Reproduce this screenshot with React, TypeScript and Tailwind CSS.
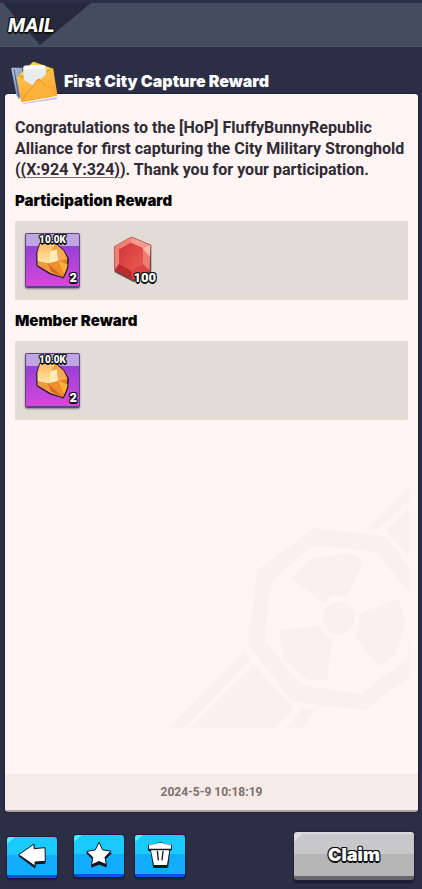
import type { ReactNode } from "react";

const outline =
  "[text-shadow:1px_0_#111,-1px_0_#111,0_1px_#111,0_-1px_#111,1px_1px_#111,-1px_-1px_#111,1px_-1px_#111,-1px_1px_#111,0_2px_#111]";

function EnvelopeIcon() {
  return (
    <svg viewBox="0 0 140 128" className="relative z-10 -mb-[10px] h-[43px] w-[47px] shrink-0" aria-hidden="true">
      <defs>
        <linearGradient id="envFront" x1="0" y1="0" x2="0.4" y2="1">
          <stop offset="0" stopColor="#ffd05a" />
          <stop offset="1" stopColor="#f9a12c" />
        </linearGradient>
        <linearGradient id="envBlue" x1="0" y1="0" x2="1" y2="1">
          <stop offset="0" stopColor="#b9c9e6" />
          <stop offset="1" stopColor="#66799f" />
        </linearGradient>
      </defs>
      <path d="M34 126 L138 108 L138 113 L36 128Z" fill="#20243b" opacity="0.25" />
      <path d="M1 24 Q0 20 5 20 L34 20 L38 112 L17 105Z" fill="url(#envBlue)" />
      <path d="M9 24 L24 112" stroke="#4d5d83" strokeWidth="3" />
      <path d="M18 48 L64 4 Q67 1 71 3 L126 23 L128 62 L40 80Z" fill="#eda62d" />
      <path d="M22 44 L66 4 L124 24 L84 30Z" fill="#ffd44d" />
      <path d="M18 48 Q17 44 22 46 L67 74 L118 26 Q124 20 126 27 L138 98 Q139 103 134 104 L36 122 Q30 123 29 117Z" fill="url(#envFront)" />
      <path d="M38 56 L36 20 Q36 15 41 14 L97 12 Q102 12 103 17 L106 38 L88 55 Q82 50 77 56 L66 74Z" fill="#e9ebee" />
      <path d="M41 14 L97 12 L101 22 L38 26Z" fill="#fafafa" />
      <path d="M32 119 L76 59 Q81 53 87 57 L135 101" fill="#fbb23a" />
      <path d="M32 119 L76 59 Q81 53 87 57 L104 73" fill="none" stroke="#dc8422" strokeWidth="2" />
    </svg>
  );
}

function Watermark() {
  return (
    <svg
      viewBox="0 0 747 743"
      className="pointer-events-none absolute bottom-[46px] right-[9px] h-[248px] w-[249px]"
      fill="#faf1ee"
      aria-hidden="true"
    >
      <path
        fillRule="evenodd"
        d="M464 143 L677 169 L747 257 V337 L648 217 L464 193 L333 302 L314 482 L427 617 L603 641 L741 538 L747 466 V592 L611 690 L394 663 L264 491 L291 270Z"
      />
      <path d="M394 297 L446 237 L573 218 L610 242 L560 350 Q535 341 512 351 L490 367Z" />
      <path d="M598 401 L714 354 L739 427 L704 528 L658 558 L583 467Q600 438 598 401Z" />
      <path d="M358 450 L482 435 Q490 465 516 484 L501 601 L443 599 L370 535Z" />
      <circle cx="536" cy="413" r="48" />
      <path d="M747 18 V62 L653 149 H617Z" />
      <path d="M747 82 V230 L679 151Z" />
      <path d="M253 511 L270 537 L76 743 H27Z" />
      <path d="M280 552 L402 684 L348 743 H92Z" />
      <path d="M424 688 H468 L425 743 H380Z" />
    </svg>
  );
}

function AmberCrate() {
  return (
    <div className="relative h-[55px] w-[55px] overflow-hidden rounded-[2px] border border-b-2 border-[#5c4579] bg-linear-to-b from-[#8538d5] to-[#d747dc] shadow-[0_1px_2px_#8b7d88]">
      <div className="h-3 bg-[#bda6e3]" />
      <svg viewBox="0 0 165 165" className="absolute inset-0 h-full w-full" aria-hidden="true">
        <defs>
          <linearGradient id="amberBase" x1="0" y1="0" x2="0.3" y2="1">
            <stop offset="0" stopColor="#f9a94c" />
            <stop offset="1" stopColor="#e27822" />
          </linearGradient>
          <linearGradient id="amberSide" x1="0" y1="0" x2="0" y2="1">
            <stop offset="0" stopColor="#ffce7c" />
            <stop offset="1" stopColor="#ffe6ac" />
          </linearGradient>
        </defs>
        <path d="M43 30 L92 28 L118 54 L132 78 L130 108 L117 138 L76 126 L34 100 L33 61Z" fill="url(#amberBase)" stroke="#2b1927" strokeWidth="5" strokeLinejoin="round" />
        <path d="M43 32 L92 30 L76 58 L35 56Z" fill="#ffc574" />
        <path d="M35 56 L76 54 L68 94 L35 86Z" fill="url(#amberSide)" />
        <path d="M76 54 L96 48 L101 86 L68 94Z" fill="#ffebb5" />
        <path d="M92 30 L118 54 L130 78 L101 86 L96 48Z" fill="#f7aa4e" />
        <path d="M35 87 L68 94 L116 137 L76 124 L35 99Z" fill="#f09a3f" />
        <path d="M68 94 L101 86 L124 116 L116 137Z" fill="#f08d2d" />
        <path d="M101 86 L130 96 L128 108 L120 127Z" fill="#fdb036" />
        <path d="M68 94 L114 136 L78 119Z" fill="#d06d22" />
      </svg>
      <span className={`absolute inset-x-0 top-0 text-center text-[10px] leading-3 font-black text-white ${outline}`}>
        10.0K
      </span>
      <span className={`absolute right-[2px] bottom-0 text-[13px] leading-4 font-black text-white ${outline}`}>2</span>
    </div>
  );
}

function RubyItem() {
  return (
    <div className="relative h-[55px] w-12">
      <svg viewBox="0 0 144 165" className="absolute inset-0 h-full w-full" aria-hidden="true">
        <defs>
          <linearGradient id="rubyFace" x1="0" y1="0" x2="1" y2="1">
            <stop offset="0" stopColor="#cf3538" />
            <stop offset="0.55" stopColor="#e04a45" />
            <stop offset="1" stopColor="#e9605a" />
          </linearGradient>
        </defs>
        <path d="M72 12 L130 36 L130 116 L78 148 L20 118 L18 42Z" fill="#4a302e" opacity="0.8" />
        <path d="M70 12 L127 36 L125 113 L74 140 L20 111 L19 41Z" fill="#d8393b" stroke="#7a3434" strokeWidth="2" />
        <path d="M19 41 L70 12 L68 29 L33 50Z" fill="#ee8275" />
        <path d="M70 12 L127 36 L103 45 L68 29Z" fill="#f59a8c" />
        <path d="M19 41 L33 50 L34 92 L20 111Z" fill="#ee8174" />
        <path d="M127 36 L125 113 L104 93 L103 45Z" fill="#ee7c72" />
        <path d="M103 45 L127 36 L126 72Z" fill="#ffb9aa" />
        <path d="M34 92 L70 114 L74 140 L20 111Z" fill="#b92d31" />
        <path d="M70 114 L104 93 L125 113 L74 140Z" fill="#dc4544" />
        <path d="M68 29 L103 45 L104 93 L70 114 L34 92 L33 50Z" fill="url(#rubyFace)" />
      </svg>
      <span className={`absolute right-0 bottom-[2px] text-[13px] leading-4 font-black text-white ${outline}`}>100</span>
    </div>
  );
}

function RewardSection({ title, children }: { title: string; children: ReactNode }) {
  return (
    <section>
      <h2 className="flex h-[41px] items-center pt-[2px] font-[Inter] text-[15px] font-black text-black">{title}</h2>
      <div className="flex h-[79px] items-start gap-7 rounded-[2px] bg-[#e2dbd6] px-[10px] pt-3">{children}</div>
    </section>
  );
}

function BlueButton({ label, className, children }: { label: string; className: string; children: ReactNode }) {
  return (
    <button
      type="button"
      aria-label={label}
      className={`relative flex w-[50px] items-center justify-center overflow-hidden rounded-[3px] border-b-[3px] border-[#0753dc] bg-[linear-gradient(#1bcbff_0_48%,#12adff_48%)] shadow-[0_0_0_1px_#182139,0_2px_2px_#141a30] ${className}`}
    >
      <span className="absolute top-0 left-0 h-[7px] w-2 bg-[#43f5f4] [clip-path:polygon(0_0,100%_0,0_100%)]" />
      {children}
    </button>
  );
}

export default function App() {
  return (
    <div className="flex min-h-screen flex-col bg-[#2c2e45] font-[Roboto,sans-serif]">
      <header className="relative mt-[3px] h-11 border-b border-[#4c5165] bg-[#444c5f]">
        <svg viewBox="0 0 92 43" className="absolute top-0 left-0 h-[43px] w-[92px]" aria-hidden="true">
          <path d="M3 0 H91 L40 42Z" fill="#272a3f" />
        </svg>
        <h1 className={`relative pt-2 pl-2 text-xl leading-7 font-extrabold text-white italic ${outline}`}>
          MAIL
        </h1>
      </header>

      <main className="flex flex-1 flex-col">
        <div className="flex h-[47px] items-end pl-[11px]">
          <EnvelopeIcon />
          <h2 className="ml-[6px] pb-[3px] font-[Inter] text-base leading-5 font-black text-white">First City Capture Reward</h2>
        </div>

        <article className="mr-1 ml-[5px] flex flex-1 flex-col rounded-[3px] border-b-2 border-[#aaa1a8] bg-[#fff5f4] shadow-[0_0_1px_1px_#202238]">
          <div className="relative flex-1 px-[10px] pt-[23px]">
            <Watermark />
            <div className="relative">
              <p className="text-base leading-[21px] font-bold text-[#302a34]">
                Congratulations to the [HoP] FluffyBunnyRepublic
                <br />
                Alliance for first capturing the City Military Stronghold
                <br />(
                <a href="#stronghold" className="underline decoration-[#777078] decoration-1 underline-offset-2">
                  (X:924 Y:324)
                </a>
                ). Thank you for your participation.
              </p>
              <RewardSection title="Participation Reward">
                <AmberCrate />
                <RubyItem />
              </RewardSection>
              <RewardSection title="Member Reward">
                <AmberCrate />
              </RewardSection>
            </div>
          </div>
          <footer className="flex h-9 items-center justify-center bg-[#f6ebe8] text-xs font-bold text-[#7b7170]">
            <time dateTime="2024-05-09T10:18:19">2024-5-9 10:18:19</time>
          </footer>
        </article>
      </main>

      <nav className="flex h-[77px] items-start pt-[23px] pr-2 pl-[7px]" aria-label="Mail actions">
        <BlueButton label="Back" className="mt-[2px] h-[41px]">
          <svg viewBox="0 0 84 78" className="h-[26px] w-7" aria-hidden="true">
            <path d="M2 40 L49 8 L50 19 L81 20 L82 62 L53 64 L52 77Z" fill="#101820" />
            <path d="M2 35 L48 3 L48 17 L81 14 L82 55 L51 57 L51 69Z" fill="white" stroke="#101820" strokeWidth="3" />
          </svg>
        </BlueButton>
        <BlueButton label="Favourite" className="ml-[17px] h-[42px]">
          <svg viewBox="0 0 78 80" className="h-[27px] w-[26px]" aria-hidden="true">
            <path d="M39 9 L50 31 L76 36 L58 54 L61 77 L39 69 L17 78 L20 54 L2 36 L28 31Z" fill="#101820" stroke="#101820" strokeWidth="3" />
            <path d="M39 3 L50 26 L75 30 L57 48 L61 70 L39 61 L17 71 L20 48 L2 31 L28 26Z" fill="white" stroke="#101820" strokeWidth="3" />
          </svg>
        </BlueButton>
        <BlueButton label="Delete" className="ml-[11px] h-[42px]">
          <svg viewBox="0 0 72 78" className="h-[26px] w-6" aria-hidden="true">
            <path d="M2 9 L25 7 L29 3 H44 L48 7 L70 9 V24 L65 26 L59 76 L17 77 L9 27 L2 26Z" fill="#101820" stroke="#101820" strokeWidth="3" />
            <path d="M3 8 L25 6 L29 3 H44 L48 6 L69 8 V20 H3Z" fill="white" />
            <path d="M9 25 H64 L57 69 H18Z" fill="white" />
            <path d="M28 27 L31 55 M45 27 L42 55" stroke="#101820" strokeWidth="4" />
          </svg>
        </BlueButton>
        <button
          type="button"
          className={`relative -mt-[3px] ml-auto h-12 w-[120px] overflow-hidden rounded-[3px] border-t-2 border-b-4 border-t-[#d9d9df] border-b-[#68686c] bg-[linear-gradient(#c8c8ca_0_48%,#b5b5b6_48%)] font-[Inter] text-lg leading-6 font-black text-white shadow-[0_0_0_1px_#202338,0_3px_2px_#171a2d] ${outline}`}
        >
          <span className="absolute top-0 left-0 h-2 w-2 bg-[#dedee1] [clip-path:polygon(0_0,100%_0,0_100%)]" />
          Claim
        </button>
      </nav>
    </div>
  );
}
